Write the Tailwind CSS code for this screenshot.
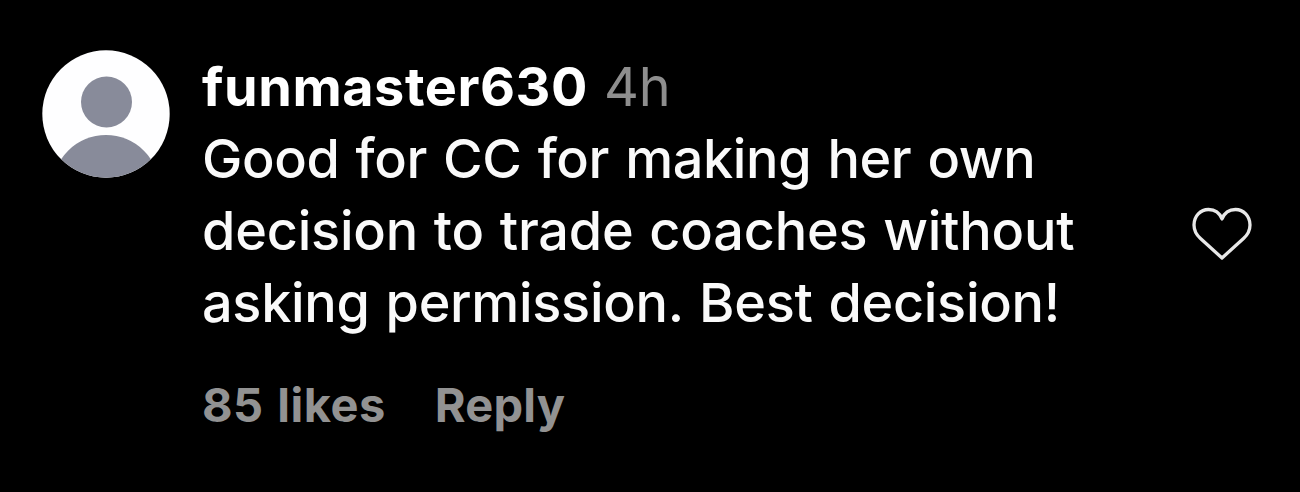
<!DOCTYPE html>
<html lang="en">
<head>
  <meta charset="UTF-8">
  <meta name="viewport" content="width=device-width, initial-scale=1.0">
  <title>Comment</title>
  <script src="https://cdn.jsdelivr.net/npm/@tailwindcss/browser@4"></script>
</head>
<body class="bg-black h-screen overflow-hidden font-['Inter',sans-serif]">
  <!-- Comment -->
  <article class="flex items-start pt-[50px] pl-[42px] pr-12">
    <!-- Avatar -->
    <svg class="w-32 h-32 shrink-0" viewBox="0 0 128 128">
      <defs>
        <clipPath id="avatar"><circle cx="64" cy="64" r="63.7" /></clipPath>
      </defs>
      <g clip-path="url(#avatar)">
        <rect width="128" height="128" fill="#fefeff" />
        <circle cx="64.5" cy="52" r="25.5" fill="#888b9a" />
        <circle cx="64" cy="138.6" r="53.6" fill="#888b9a" />
      </g>
    </svg>

    <!-- Text -->
    <div class="ml-8 mt-px flex-1 whitespace-nowrap">
      <div class="flex text-[54px] leading-[72px]">
        <span class="font-bold text-white tracking-[0.55px]">funmaster630</span>
        <span class="ml-4 text-[#8e8e8e]">4h</span>
      </div>
      <div class="text-[54px] leading-[72px] font-medium text-[#fafafa]">
        <p class="tracking-[-0.4px] [word-spacing:2.2px]">Good for CC for making her own</p>
        <p class="tracking-[-0.2px] [word-spacing:1.6px]">decision to trade coaches without</p>
        <p class="tracking-[-0.3px] [word-spacing:1.8px]">asking permission. Best decision!</p>
      </div>
      <div class="mt-[38px] flex text-[47px] leading-[56px] font-bold text-[#929292]">
        <span class="tracking-[0.5px] [word-spacing:2px]">85 likes</span>
        <span class="ml-[49px] tracking-[0.2px]">Reply</span>
      </div>
    </div>

    <!-- Like -->
    <svg class="mt-[157px] w-[60px] h-[54px] shrink-0" viewBox="0 0 60 54" fill="none" stroke="#e8e8e8" stroke-width="3.3" stroke-linejoin="round">
      <path d="M30 51 L8.500 31.500 C4 27.500 2 23 2 18 C2 9 8.500 2.500 16.500 2.500 C23 2.500 27.500 5.500 30 12 C32.500 5.500 37 2.500 43.500 2.500 C51.500 2.500 58 9 58 18 C58 23 56 27.500 51.500 31.500 Z" />
    </svg>
  </article>
</body>
</html>
